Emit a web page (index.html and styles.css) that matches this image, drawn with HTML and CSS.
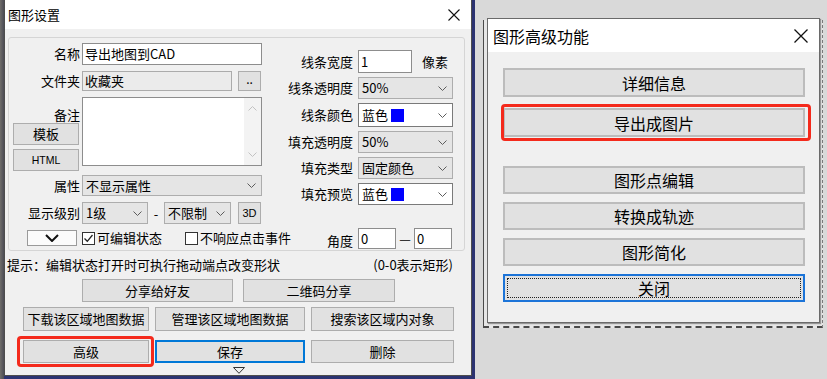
FILE: index.html
```html
<!DOCTYPE html>
<html lang="zh-CN">
<head>
<meta charset="utf-8">
<title>图形设置</title>
<link rel="stylesheet" href="styles.css">
</head>
<body>
<div class="stage-left">
  <div class="dlg">
    <div class="titlebar">
      <span class="title">图形设置</span>
      <svg class="xicon" width="12" height="12" viewBox="0 0 12 12"><path d="M0.5 0.5L11.5 11.5M11.5 0.5L0.5 11.5" stroke="#111" stroke-width="1.1" fill="none"/></svg>
    </div>
    <div class="dlg-body">
      <div class="grp">
        <div class="col-l">
          <div class="frow h22"><span class="lbl">名称</span><div class="tb w180">导出地图到CAD</div></div>
          <div class="frow h20"><span class="lbl">文件夹</span><div class="tb ro w150">收藏夹</div><div class="btn dots">..</div></div>
          <div class="memo">
            <div class="memo-side">
              <span class="lbl memo-lbl">备注</span>
              <div class="btn side-btn">模板</div>
              <div class="btn side-btn html">HTML</div>
            </div>
            <div class="ta">
              <div class="sb">
                <svg width="9" height="5" viewBox="0 0 9 5"><path d="M0.5 4.5L4.5 0.5L8.5 4.5" fill="none" stroke="#c2c2c2"/></svg>
                <svg width="9" height="5" viewBox="0 0 9 5"><path d="M0.5 0.5L4.5 4.5L8.5 0.5" fill="none" stroke="#c2c2c2"/></svg>
              </div>
            </div>
          </div>
          <div class="frow h21"><span class="lbl">属性</span>
            <div class="sel w180"><span class="v">不显示属性</span><svg width="9" height="5" viewBox="0 0 9 5"><path d="M0.5 0.5L4.5 4.5L8.5 0.5" fill="none" stroke="#5c5c5c"/></svg></div>
          </div>
          <div class="frow h22"><span class="lbl">显示级别</span>
            <div class="sel w66"><span class="v">1级</span><svg width="9" height="5" viewBox="0 0 9 5"><path d="M0.5 0.5L4.5 4.5L8.5 0.5" fill="none" stroke="#5c5c5c"/></svg></div>
            <span class="dash">-</span>
            <div class="sel w67"><span class="v">不限制</span><svg width="9" height="5" viewBox="0 0 9 5"><path d="M0.5 0.5L4.5 4.5L8.5 0.5" fill="none" stroke="#5c5c5c"/></svg></div>
            <div class="btn btn3d">3D</div>
          </div>
          <div class="frow h16">
            <div class="chev-btn"><svg width="14" height="8" viewBox="0 0 14 8"><path d="M1 1L7 7L13 1" fill="none" stroke="#111" stroke-width="2"/></svg></div>
            <span class="cb"><span class="box"><svg width="11" height="11" viewBox="0 0 11 11"><path d="M1.5 5.5L4.3 8.3L9.5 2" fill="none" stroke="#222" stroke-width="1.3"/></svg></span>可编辑状态</span>
            <span class="cb cb2"><span class="box"></span>不响应点击事件</span>
          </div>
        </div>
        <div class="col-r">
          <div class="frow h23"><span class="lbl">线条宽度</span><div class="tb w54">1</div><span class="unit">像素</span></div>
          <div class="frow h22"><span class="lbl">线条透明度</span>
            <div class="sel w95"><span class="v">50%</span><svg width="9" height="5" viewBox="0 0 9 5"><path d="M0.5 0.5L4.5 4.5L8.5 0.5" fill="none" stroke="#5c5c5c"/></svg></div>
          </div>
          <div class="frow h24"><span class="lbl">线条颜色</span>
            <div class="sel white w95"><span class="v">蓝色<i class="sw"></i></span><svg width="9" height="5" viewBox="0 0 9 5"><path d="M0.5 0.5L4.5 4.5L8.5 0.5" fill="none" stroke="#5c5c5c"/></svg></div>
          </div>
          <div class="frow h22"><span class="lbl">填充透明度</span>
            <div class="sel w95"><span class="v">50%</span><svg width="9" height="5" viewBox="0 0 9 5"><path d="M0.5 0.5L4.5 4.5L8.5 0.5" fill="none" stroke="#5c5c5c"/></svg></div>
          </div>
          <div class="frow h22"><span class="lbl">填充类型</span>
            <div class="sel w95"><span class="v">固定颜色</span><svg width="9" height="5" viewBox="0 0 9 5"><path d="M0.5 0.5L4.5 4.5L8.5 0.5" fill="none" stroke="#5c5c5c"/></svg></div>
          </div>
          <div class="frow h22"><span class="lbl">填充预览</span>
            <div class="sel white w95"><span class="v">蓝色<i class="sw"></i></span><svg width="9" height="5" viewBox="0 0 9 5"><path d="M0.5 0.5L4.5 4.5L8.5 0.5" fill="none" stroke="#5c5c5c"/></svg></div>
          </div>
          <div class="frow h21 angle"><span class="lbl lbl-low">角度</span><div class="tb w38">0</div><span class="emdash">—</span><div class="tb w38">0</div></div>
        </div>
      </div>
      <div class="hint"><span>提示：编辑状态打开时可执行拖动端点改变形状</span><span>(0-0表示矩形)</span></div>
      <div class="brow r2"><div class="btn b151">分享给好友</div><div class="btn b152">二维码分享</div></div>
      <div class="brow r3"><div class="btn bw1">下载该区域地图数据</div><div class="btn bw2">管理该区域地图数据</div><div class="btn bw3">搜索该区域内对象</div></div>
      <div class="brow r4"><div class="btn bw1 marked">高级<span class="mark mark-l"></span></div><div class="btn bw2 focus">保存</div><div class="btn bw3">删除</div></div>
      <svg class="tri" width="12" height="7" viewBox="0 0 12 7"><path d="M0.5 0.5H11.5L6 6.3Z" fill="none" stroke="#333"/></svg>
    </div>
  </div>
</div>
<div class="stage-right">
  <div class="behind"></div>
  <div class="dlg2">
    <div class="titlebar2">
      <span class="title2">图形高级功能</span>
      <svg width="14" height="14" viewBox="0 0 14 14"><path d="M0.5 0.5L13.5 13.5M13.5 0.5L0.5 13.5" stroke="#111" stroke-width="1.3" fill="none"/></svg>
    </div>
    <div class="dlg2-body">
      <div class="bgroup ga">
        <div class="btn2">详细信息</div>
        <div class="btn2 marked">导出成图片<span class="mark mark-r"></span></div>
      </div>
      <div class="bgroup gb">
        <div class="btn2">图形点编辑</div>
        <div class="btn2">转换成轨迹</div>
        <div class="btn2">图形简化</div>
        <div class="btn2 focus2">关闭</div>
      </div>
    </div>
  </div>
</div>
</body>
</html>
```

FILE: styles.css
```css
* { box-sizing: border-box; }
html, body { margin: 0; padding: 0; }
body {
  width: 827px;
  height: 379px;
  overflow: hidden;
  display: flex;
  font-family: "Noto Sans CJK SC", "Noto Sans", sans-serif;
  font-size: 13px;
  color: #000;
  background: #d9d9d9;
}

/* ---------- left: map behind the settings dialog ---------- */
.stage-left {
  width: 475px;
  height: 379px;
  flex: none;
  padding-left: 4px;
  background: linear-gradient(90deg, #6f6d6a 0, #4c4c55 4px, #2c3472 4px, #2b3270 100%);
}
.dlg {
  width: 468px;
  height: 376px;
  background: #f0f0f0;
  border: 1px solid #4d4d4d;
  border-top: 0;
  display: flex;
  flex-direction: column;
}
.titlebar {
  height: 29px;
  flex: none;
  background: #fff;
  display: flex;
  align-items: center;
  justify-content: space-between;
  padding: 0 11px 0 3px;
}
.title { font-size: 13px; line-height: 16px; }
.dlg-body { padding: 8px 0 0 3px; display: flex; flex-direction: column; }

.grp {
  width: 457px;
  height: 214px;
  flex: none;
  border: 1px solid #d5d5d5;
  border-radius: 3px;
  display: flex;
  align-items: flex-start;
}
.col-l {
  width: 249px;
  flex: none;
  margin-left: 4px;
  padding-top: 5px;
  display: flex;
  flex-direction: column;
  gap: 6px;
}
.col-r {
  flex: none;
  margin-left: 8px;
  padding-top: 12px;
  display: flex;
  flex-direction: column;
  gap: 4px;
}
.frow { display: flex; align-items: center; flex: none; white-space: nowrap; }
.h16 { height: 16px; }
.h20 { height: 20px; }
.h21 { height: 21px; }
.h22 { height: 22px; }
.h23 { height: 23px; }
.h24 { height: 24px; }

.lbl {
  width: 67px;
  margin-right: 2px;
  flex: none;
  text-align: right;
  white-space: nowrap;
  line-height: 16px;
}
.col-r .lbl { width: 83px; margin-right: 5px; }
.lbl-low { align-self: flex-end; padding-bottom: 0; }

.tb {
  height: 100%;
  flex: none;
  border: 1px solid #8d8d8d;
  background: #fff;
  padding-left: 2px;
  display: flex;
  align-items: center;
  white-space: nowrap;
  line-height: 16px;
}
.tb.ro { background: #ebebeb; border-color: #ababab; }
.w38 { width: 38px; }
.w54 { width: 54px; }
.w66 { width: 66px; }
.w67 { width: 67px; }
.w95 { width: 95px; }
.w150 { width: 150px; }
.w180 { width: 180px; }

.unit { margin-left: 10px; }
.emdash { width: 18px; text-align: center; flex: none; }
.angle { margin-top: 19px; }

.sel {
  height: 100%;
  flex: none;
  display: flex;
  align-items: center;
  padding: 0 5px 0 3px;
  border: 1px solid #adadad;
  background: #e5e5e5;
  white-space: nowrap;
  line-height: 16px;
}
.sel.white { background: #fff; border-color: #7a7a7a; }
.sel .v { flex: 1; display: flex; align-items: center; }
.sel svg { flex: none; }
.sw {
  display: inline-block;
  width: 13px;
  height: 13px;
  margin-left: 3px;
  background: #0000ff;
}
.dash { width: 16px; text-align: center; flex: none; }

.btn {
  height: 100%;
  flex: none;
  background: #e1e1e1;
  border: 1px solid #adadad;
  display: flex;
  align-items: center;
  justify-content: center;
  white-space: nowrap;
  line-height: 16px;
  position: relative;
}
.dots { width: 23px; margin-left: 6px; font-size: 12px; padding-bottom: 4px; }
.btn3d { width: 23px; margin-left: 7px; font-family: "Liberation Sans", sans-serif; font-size: 11px; }

.memo { display: flex; height: 72px; flex: none; }
.memo-side { width: 67px; margin-right: 2px; flex: none; display: flex; flex-direction: column; }
.memo-lbl { width: 67px; margin: 0; height: 26px; padding-top: 10px; }
.side-btn { width: 66px; height: 22px; }
.side-btn + .side-btn { margin-top: 4px; }
.html { font-family: "Liberation Sans", sans-serif; font-size: 10.5px; }
.ta {
  width: 180px;
  height: 69px;
  border: 1px solid #8d8d8d;
  background: #fff;
  display: flex;
  justify-content: flex-end;
}
.sb {
  width: 17px;
  height: 100%;
  background: #f3f3f3;
  display: flex;
  flex-direction: column;
  justify-content: space-between;
  align-items: center;
  padding: 8px 0 8px;
}

.chev-btn {
  width: 50px;
  height: 16px;
  flex: none;
  margin-left: 14px;
  margin-right: 5px;
  background: #fbfbfb;
  border: 1px solid #9a9a9a;
  display: flex;
  align-items: center;
  justify-content: center;
}
.cb { display: flex; align-items: center; line-height: 16px; white-space: nowrap; }
.cb2 { margin-left: 23px; }
.box {
  width: 13px;
  height: 13px;
  flex: none;
  border: 1px solid #333;
  background: #fff;
  margin-right: 2px;
  display: flex;
  align-items: center;
  justify-content: center;
}

.hint {
  width: 446px;
  height: 16px;
  margin-top: 6px;
  margin-left: -1px;
  display: flex;
  justify-content: space-between;
  line-height: 16px;
  white-space: nowrap;
}
.brow { display: flex; flex: none; }
.r2 { margin-top: 6px; padding-left: 74px; gap: 10px; height: 23px; }
.r3 { margin-top: 5px; padding-left: 15px; gap: 6px; height: 24px; }
.r4 { margin-top: 9px; padding-left: 15px; gap: 6px; height: 23px; }
.b151 { width: 151px; }
.b152 { width: 152px; }
.bw1 { width: 126px; }
.bw2 { width: 150px; }
.bw3 { width: 143px; }
.focus { border-color: #0078d7; box-shadow: inset 0 0 0 1px #0078d7; }
.tri { margin: 4px 0 0 225px; flex: none; }

/* red annotation boxes laid over buttons */
.mark {
  position: absolute;
  border: 3px solid #f42a1c;
  border-radius: 4px;
  pointer-events: none;
}
.mark-l { left: -7px; right: -6px; top: -5px; bottom: -5px; }
.mark-r { left: -4px; right: -8px; top: -6px; bottom: -6px; }

/* ---------- right: advanced functions dialog ---------- */
.stage-right {
  flex: 1;
  height: 379px;
  position: relative;
  background: #d9d9d9;
  padding: 18px 0 0 12px;
}
.behind {
  position: absolute;
  left: 8px;
  top: 20px;
  width: 340px;
  height: 308px;
  border-left: 1px solid #4a4a4a;
  border-right: 1px dashed #7a7a7a;
  border-bottom: 2px dashed #4a4a4a;
  background: #e6e6e6;
}
.dlg2 {
  position: relative;
  z-index: 1;
  width: 333px;
  height: 305px;
  background: #f0f0f0;
  border: 1px solid #6a6a6a;
  box-shadow: 1px 1px 1px rgba(0, 0, 0, 0.35);
  display: flex;
  flex-direction: column;
}
.titlebar2 {
  height: 33px;
  flex: none;
  background: #fff;
  display: flex;
  align-items: center;
  justify-content: space-between;
  padding: 0 11px 0 5px;
}
.title2 { font-size: 16px; line-height: 20px; }
.dlg2-body { padding: 16px 0 0 15px; display: flex; flex-direction: column; }
.bgroup { display: flex; flex-direction: column; }
.ga { gap: 11px; }
.gb { gap: 8px; margin-top: 29px; }
.btn2 {
  position: relative;
  width: 302px;
  height: 29px;
  background: #e1e1e1;
  border: 2px solid #bcbcbc;
  font-size: 16px;
  line-height: 20px;
  display: flex;
  align-items: center;
  justify-content: center;
}
.gb .btn2 { height: 28px; }
.focus2 { border-color: #1c74d8; }
.focus2::after {
  content: "";
  position: absolute;
  inset: 2px;
  border: 1px dotted #222;
}
```
